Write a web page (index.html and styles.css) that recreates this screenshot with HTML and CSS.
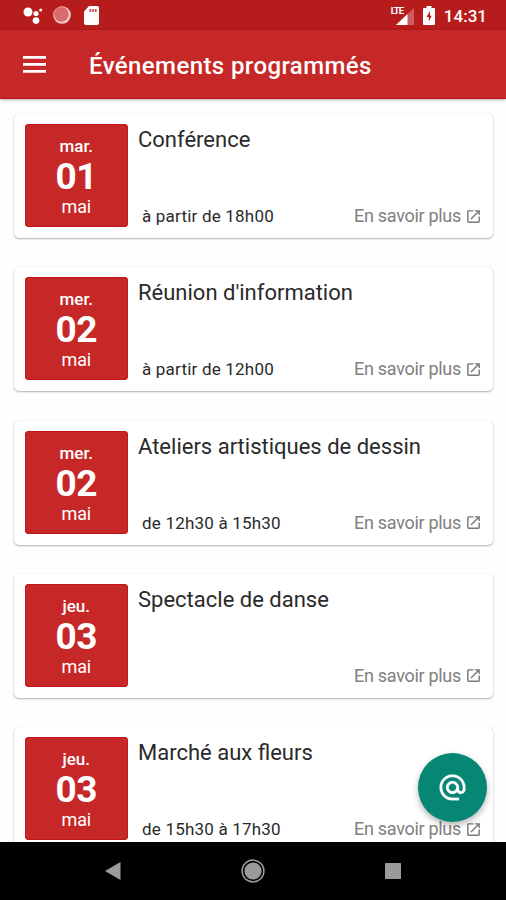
FILE: index.html
```
<!DOCTYPE html>
<html lang="fr">
<head>
    <meta charset="UTF-8">
    <meta name="viewport" content="width=device-width, initial-scale=1.0">
    <title>Événements programmés</title>
    <link rel="stylesheet" href="styles.css">
</head>
<body>
<svg class="sprite" width="0" height="0">
    <symbol id="open-icon" viewBox="0 0 24 24">
        <path d="M19 19H5V5h7V3H5a2 2 0 0 0-2 2v14a2 2 0 0 0 2 2h14c1.1 0 2-.9 2-2v-7h-2v7zM14 3v2h3.59l-9.83 9.83 1.41 1.41L19 6.41V10h2V3h-7z"/>
    </symbol>
</svg>

<div class="status-bar">
    <div class="status-left">
        <svg width="20" height="18" viewBox="0 0 20 18" fill="#fff">
            <circle cx="5" cy="5" r="4.5"/>
            <circle cx="13" cy="6.5" r="2.6"/>
            <circle cx="17.7" cy="3" r="1.5"/>
            <circle cx="13" cy="13.6" r="3.3"/>
        </svg>
        <svg class="sync-icon" width="18" height="18" viewBox="0 0 18 18">
            <circle cx="9" cy="9" r="8.8" fill="#f6c9c9"/>
            <circle cx="8.3" cy="8.3" r="7.4" fill="#d96a6e"/>
        </svg>
        <svg class="sd-icon" width="15" height="19" viewBox="0 0 15 19">
            <path d="M5 0h8a2 2 0 0 1 2 2v15a2 2 0 0 1-2 2H2a2 2 0 0 1-2-2V5.500z" fill="#fff"/>
            <path d="M5.500 3h1.700v3H5.500zM8.200 3h1.700v3H8.200zM10.900 3h1.700v3h-1.700z" fill="#c9484a"/>
        </svg>
    </div>
    <div class="status-right">
        <div class="signal">
            <span class="lte">LTE</span>
            <svg width="18" height="17" viewBox="0 0 18 17">
                <path d="M0 17L18 0v17z" fill="#cf5c5f"/>
                <path d="M0 17L11.500 6v11z" fill="#fff"/>
            </svg>
        </div>
        <svg class="battery" width="12" height="19" viewBox="0 0 12 19">
            <path d="M3.500 0h5v2H11a1 1 0 0 1 1 1v15a1 1 0 0 1-1 1H1a1 1 0 0 1-1-1V3a1 1 0 0 1 1-1h2.500z" fill="#fff"/>
            <path d="M7 5L3.500 11h2.300v4.500L8.700 9.800H7z" fill="#b71c1c"/>
        </svg>
        <span class="clock">14:31</span>
    </div>
</div>

<header class="app-bar">
    <svg class="menu-icon" width="23" height="17" viewBox="0 0 23 17" fill="#fff">
        <path d="M0 0h23v2.800H0zM0 7h23v2.800H0zM0 14h23v2.800H0z"/>
    </svg>
    <h1>Événements programmés</h1>
</header>

<main class="events">
    <article class="card">
        <div class="date">
            <span class="day">mar.</span>
            <span class="num">01</span>
            <span class="month">mai</span>
        </div>
        <div class="info">
            <h2>Conférence</h2>
            <div class="info-bottom">
                <span class="time">à partir de 18h00</span>
                <a class="more">En savoir plus <svg class="open"><use href="#open-icon"/></svg></a>
            </div>
        </div>
    </article>
    <article class="card">
        <div class="date">
            <span class="day">mer.</span>
            <span class="num">02</span>
            <span class="month">mai</span>
        </div>
        <div class="info">
            <h2>Réunion d'information</h2>
            <div class="info-bottom">
                <span class="time">à partir de 12h00</span>
                <a class="more">En savoir plus <svg class="open"><use href="#open-icon"/></svg></a>
            </div>
        </div>
    </article>
    <article class="card">
        <div class="date">
            <span class="day">mer.</span>
            <span class="num">02</span>
            <span class="month">mai</span>
        </div>
        <div class="info">
            <h2>Ateliers artistiques de dessin</h2>
            <div class="info-bottom">
                <span class="time">de 12h30 à 15h30</span>
                <a class="more">En savoir plus <svg class="open"><use href="#open-icon"/></svg></a>
            </div>
        </div>
    </article>
    <article class="card">
        <div class="date">
            <span class="day">jeu.</span>
            <span class="num">03</span>
            <span class="month">mai</span>
        </div>
        <div class="info">
            <h2>Spectacle de danse</h2>
            <div class="info-bottom">
                <span class="time"></span>
                <a class="more">En savoir plus <svg class="open"><use href="#open-icon"/></svg></a>
            </div>
        </div>
    </article>
    <article class="card">
        <div class="date">
            <span class="day">jeu.</span>
            <span class="num">03</span>
            <span class="month">mai</span>
        </div>
        <div class="info">
            <h2>Marché aux fleurs</h2>
            <div class="info-bottom">
                <span class="time">de 15h30 à 17h30</span>
                <a class="more">En savoir plus <svg class="open"><use href="#open-icon"/></svg></a>
            </div>
        </div>
    </article>
    <button class="fab" aria-label="Contact">
        <svg width="31" height="31" viewBox="0 0 24 24" fill="#fff" stroke="#fff" stroke-width="0.2">
            <path d="M12 1.950c-5.520 0-10 4.480-10 10s4.480 10 10 10h5v-2h-5c-4.340 0-8-3.660-8-8s3.660-8 8-8 8 3.660 8 8v1.430c0 .790-.710 1.570-1.500 1.570s-1.500-.780-1.500-1.570v-1.430c0-2.760-2.240-5-5-5s-5 2.240-5 5 2.240 5 5 5c1.380 0 2.640-.560 3.540-1.470.650.890 1.770 1.470 2.960 1.470 1.970 0 3.500-1.600 3.500-3.570v-1.430c0-5.520-4.480-10-10-10zm0 13c-1.660 0-3-1.340-3-3s1.340-3 3-3 3 1.340 3 3-1.340 3-3 3z"/>
        </svg>
    </button>
</main>

<nav class="nav-bar">
    <svg width="16" height="18" viewBox="0 0 16 18"><path d="M0 9L15.500 0v18z" fill="#9b9b9b"/></svg>
    <svg width="24" height="24" viewBox="0 0 24 24">
        <circle cx="12" cy="12" r="10.900" fill="none" stroke="#9b9b9b" stroke-width="1.500"/>
        <circle cx="12" cy="12" r="8.600" fill="#9b9b9b"/>
    </svg>
    <svg width="16" height="16" viewBox="0 0 16 16"><rect width="16" height="16" rx="0.500" fill="#9b9b9b"/></svg>
</nav>
</body>
</html>
```
FILE: styles.css
```
* {
    box-sizing: border-box;
}
body {
    margin: 0;
    height: 900px;
    display: flex;
    flex-direction: column;
    overflow: hidden;
    background: #fefefe;
    font-family: Roboto, sans-serif;
}
h1, h2 {
    margin: 0;
}
svg {
    display: block;
    flex: none;
}
.sprite {
    position: absolute;
}
.status-bar {
    height: 30px;
    flex: none;
    display: flex;
    justify-content: space-between;
    background: #b71c1c;
    color: #fff;
    padding: 6px 19px 0 23px;
}
.status-left, .status-right {
    display: flex;
    align-items: flex-start;
}
.status-left svg:first-child {
    margin-top: 1px;
}
.sync-icon {
    margin-left: 10px;
}
.sd-icon {
    margin-left: 13px;
}
.signal {
    display: flex;
    align-items: flex-start;
}
.signal svg {
    margin: 2px 0 0 -7px;
}
.lte {
    width: 12px;
    font-size: 9.5px;
    line-height: 9px;
    font-weight: 700;
    letter-spacing: -1.1px;
}
.battery {
    margin: 0 9px;
}
.clock {
    font-size: 17px;
    line-height: 20px;
    font-weight: 500;
}
.app-bar {
    height: 69px;
    flex: none;
    display: flex;
    align-items: center;
    background: #c62828;
    border-bottom: 1px solid #bb1518;
    padding: 3px 23px 0;
    box-shadow: 0 1px 3px rgba(0, 0, 0, 0.3);
    z-index: 1;
}
.menu-icon {
    margin-top: -2px;
}
.app-bar h1 {
    margin-left: 43px;
    color: #fff;
    font-size: 24px;
    font-weight: 500;
    line-height: 30px;
    letter-spacing: 0.4px;
}
.events {
    position: relative;
    height: 743px;
    flex: none;
    overflow: hidden;
    display: flex;
    flex-direction: column;
    gap: 29.3px;
    padding: 15px 13px 0 14px;
}
.card {
    height: 124px;
    flex: none;
    display: flex;
    padding: 10px 11px;
    background: #fff;
    border-radius: 5px;
    box-shadow: 0 1px 2px rgba(0, 0, 0, 0.3), 0 0 1px rgba(0, 0, 0, 0.15);
}
.date {
    width: 102.5px;
    height: 103px;
    display: flex;
    flex-direction: column;
    align-items: center;
    padding-top: 13px;
    border-radius: 4px;
    background: #c62828;
    box-shadow: inset 0 0 0 1px #bf171a;
    color: #fff;
}
.day {
    font-size: 17px;
    line-height: 19px;
    font-weight: 500;
}
.num {
    font-size: 37px;
    line-height: 42px;
    font-weight: 700;
    letter-spacing: -0.5px;
}
.month {
    font-size: 18px;
    line-height: 18px;
    letter-spacing: -0.2px;
}
.info {
    flex: 1;
    display: flex;
    flex-direction: column;
    justify-content: space-between;
    padding: 1px 0 0 10.5px;
}
.info h2 {
    font-size: 22px;
    line-height: 30px;
    font-weight: 400;
    color: #2a2a2a;
}
.info-bottom {
    display: flex;
    justify-content: space-between;
    font-size: 17px;
    line-height: 24px;
    padding-left: 4px;
}
.time {
    color: #2a2a2a;
    letter-spacing: 0.2px;
}
.more {
    display: flex;
    align-items: center;
    gap: 4px;
    font-size: 18px;
    letter-spacing: -0.3px;
    color: #808080;
}
.open {
    width: 17px;
    height: 17px;
    fill: #777;
}
.fab {
    position: absolute;
    right: 19px;
    bottom: 20px;
    width: 69px;
    height: 69px;
    display: flex;
    align-items: center;
    justify-content: center;
    padding: 0;
    border: none;
    border-radius: 50%;
    background: #058774;
    box-shadow: 0 3px 6px rgba(0, 0, 0, 0.3);
}
.nav-bar {
    height: 58px;
    flex: none;
    display: flex;
    align-items: center;
    justify-content: space-between;
    background: #000;
    padding: 0 105px;
}
```
